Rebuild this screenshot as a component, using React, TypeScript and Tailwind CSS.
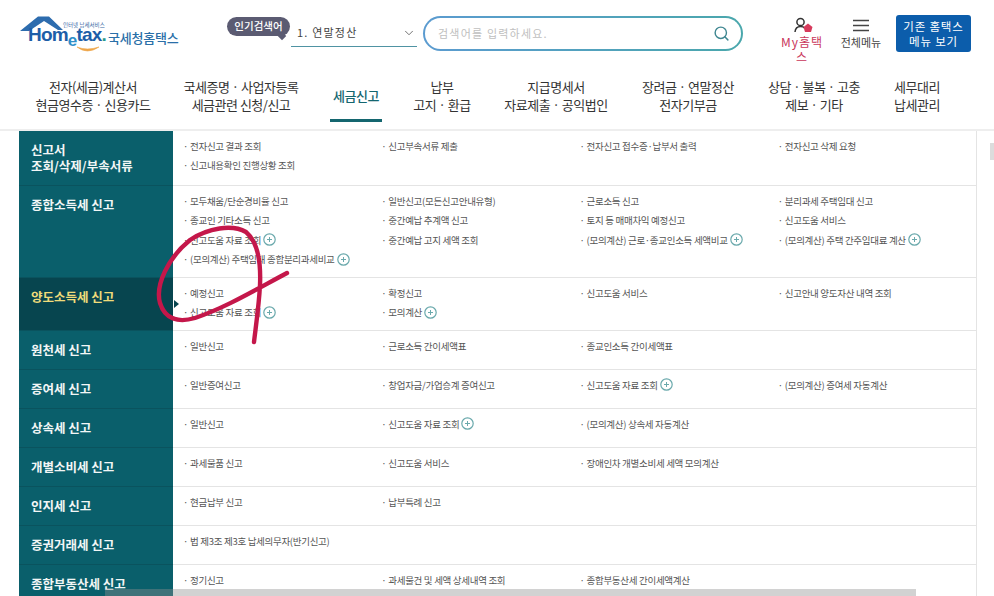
import React from 'react';
import { Search, ChevronDown } from 'lucide-react';

const FONT = "font-['Noto_Sans_CJK_KR','Noto_Sans',sans-serif]";

interface Item {
  text: string;
  plus?: boolean;
}

interface Row {
  label: string[];
  height: string;
  active?: boolean;
  items: (Item | null)[];
}

const nav = [
  { w: 'w-[146px]', lines: ['전자(세금)계산서', '현금영수증 · 신용카드'] },
  { w: 'w-[150px]', lines: ['국세증명 · 사업자등록', '세금관련 신청/신고'] },
  { w: 'w-[80px]', lines: ['세금신고'], active: true },
  { w: 'w-[92px]', lines: ['납부', '고지 · 환급'] },
  { w: 'w-[136px]', lines: ['지급명세서', '자료제출 · 공익법인'] },
  { w: 'w-[128px]', lines: ['장려금 · 연말정산', '전자기부금'] },
  { w: 'w-[124px]', lines: ['상담 · 불복 · 고충', '제보 · 기타'] },
  { w: 'w-[82px]', lines: ['세무대리', '납세관리'] },
];

const rows: Row[] = [
  {
    label: ['신고서', '조회/삭제/부속서류'],
    height: 'h-[55px]',
    items: [
      { text: '전자신고 결과 조회' },
      { text: '신고부속서류 제출' },
      { text: '전자신고 접수증·납부서 출력' },
      { text: '전자신고 삭제 요청' },
      { text: '신고내용확인 진행상황 조회' },
    ],
  },
  {
    label: ['종합소득세 신고'],
    height: 'h-[92px]',
    items: [
      { text: '모두채움/단순경비율 신고' },
      { text: '일반신고(모든신고안내유형)' },
      { text: '근로소득 신고' },
      { text: '분리과세 주택임대 신고' },
      { text: '종교인 기타소득 신고' },
      { text: '중간예납 추계액 신고' },
      { text: '토지 등 매매차익 예정신고' },
      { text: '신고도움 서비스' },
      { text: '신고도움 자료 조회', plus: true },
      { text: '중간예납 고지 세액 조회' },
      { text: '(모의계산) 근로·종교인소득 세액비교', plus: true },
      { text: '(모의계산) 주택 간주임대료 계산', plus: true },
      { text: '(모의계산) 주택임대 종합분리과세비교', plus: true },
    ],
  },
  {
    label: ['양도소득세 신고'],
    height: 'h-[53px]',
    active: true,
    items: [
      { text: '예정신고' },
      { text: '확정신고' },
      { text: '신고도움 서비스' },
      { text: '신고안내 양도자산 내역 조회' },
      { text: '신고도움 자료 조회', plus: true },
      { text: '모의계산', plus: true },
    ],
  },
  {
    label: ['원천세 신고'],
    height: 'h-[39px]',
    items: [{ text: '일반신고' }, { text: '근로소득 간이세액표' }, { text: '종교인소득 간이세액표' }],
  },
  {
    label: ['증여세 신고'],
    height: 'h-[39px]',
    items: [
      { text: '일반증여신고' },
      { text: '창업자금/가업승계 증여신고' },
      { text: '신고도움 자료 조회', plus: true },
      { text: '(모의계산) 증여세 자동계산' },
    ],
  },
  {
    label: ['상속세 신고'],
    height: 'h-[39px]',
    items: [{ text: '일반신고' }, { text: '신고도움 자료 조회', plus: true }, { text: '(모의계산) 상속세 자동계산' }],
  },
  {
    label: ['개별소비세 신고'],
    height: 'h-[39px]',
    items: [{ text: '과세물품 신고' }, { text: '신고도움 서비스' }, { text: '장애인차 개별소비세 세액 모의계산' }],
  },
  {
    label: ['인지세 신고'],
    height: 'h-[39px]',
    items: [{ text: '현금납부 신고' }, { text: '납부특례 신고' }],
  },
  {
    label: ['증권거래세 신고'],
    height: 'h-[39px]',
    items: [{ text: '법 제3조 제3호 납세의무자(반기신고)' }],
  },
  {
    label: ['종합부동산세 신고'],
    height: 'h-[39px]',
    items: [{ text: '정기신고' }, { text: '과세물건 및 세액 상세내역 조회' }, { text: '종합부동산세 간이세액계산' }],
  },
];

const PlusBadge = () => (
  <svg width="13" height="13" viewBox="0 0 13 13" className="ml-[2px] shrink-0" fill="none">
    <circle cx="6.5" cy="6.5" r="5.7" stroke="#6aa9ac" strokeWidth="1.2" />
    <path d="M6.5 4v5M4 6.5h5" stroke="#6aa9ac" strokeWidth="1" />
  </svg>
);

const Logo = () => (
  <div className="w-[160px] h-[40px] relative">
    <svg width="46" height="18" viewBox="0 0 46 18" className="absolute left-0 top-[1px]" fill="none">
      <path d="M0 15 L18 0.5 L29 0.5 L43 14 L38 14 L24 5 L9 15 Z" fill="#2d6cae" />
    </svg>
    <span className="absolute left-[43px] top-[7px] text-[5.5px] leading-[6px] text-[#3b6aa5] whitespace-nowrap">인터넷 납세서비스</span>
    <span className="absolute left-[8px] top-[9px] font-['Liberation_Sans',sans-serif] font-bold text-[19px] leading-[22px] tracking-[-0.8px] text-[#1d5ea8] whitespace-nowrap">
      Hom<span className="relative top-[5px] text-[#2f8fc9] text-[17px]">e</span>tax<span className="text-[#2a9a8f]">.</span>
    </span>
    <svg width="24" height="8" viewBox="0 0 24 8" className="absolute left-[56px] top-[31px]" fill="none">
      <path d="M1 1 Q 11 9 23 1 Q 11 5 1 1Z" fill="#eea64a" stroke="#eea64a" strokeWidth="0.6" />
    </svg>
    <span className="absolute left-[88px] top-[14px] font-medium text-[13px] leading-[18px] text-[#2a6fa8] whitespace-nowrap tracking-[-0.2px]">국세청홈택스</span>
  </div>
);

const Header = () => (
  <header className="h-[131px] border-b-2 border-[#eeeeee] bg-white">
    <div className="flex items-start h-[74px] pl-[20px]">
      <div className="mt-[15px] shrink-0">
        <Logo />
      </div>
      <div className="ml-[47px] mt-[17px] relative h-[19px] w-[63px] rounded-full bg-[#5b5b72] text-white text-[10.5px] leading-[18px] text-center font-medium">
        인기검색어
        <span className="absolute right-[5px] bottom-[-3px] w-[6px] h-[6px] bg-[#5b5b72] rotate-45" />
      </div>
      <div className="ml-[1px] mt-[19px] w-[126px] h-[28px] border-b border-[#4f93a3] flex items-center justify-between pl-[6px] pr-[1px]">
        <span className="text-[11px] text-[#444] tracking-[1.2px]">1. 연말정산</span>
        <ChevronDown size={14} strokeWidth={1.4} className="text-[#555]" />
      </div>
      <div className="ml-[6px] mt-[16px] w-[320px] h-[35px] rounded-full p-[2px] bg-gradient-to-r from-[#5b9bd0] to-[#4aa7ac]">
        <div className="w-full h-full rounded-full bg-white flex items-center justify-between pl-[13px] pr-[11px]">
          <span className="text-[11px] text-[#c0c0c0] tracking-[1.2px]">검색어를 입력하세요.</span>
          <Search size={17} strokeWidth={2} className="text-[#3f8791]" />
        </div>
      </div>
      <div className="ml-[35px] mt-[17px] w-[48px] flex flex-col items-center">
        <svg width="20" height="16" viewBox="0 0 20 16" fill="none" className="ml-[3px]">
          <circle cx="6.5" cy="5" r="3.6" stroke="#333" strokeWidth="1.5" />
          <path d="M1 15 Q 1.5 9.5 6.5 9.5 Q 9.5 9.5 10.5 11" stroke="#333" strokeWidth="1.5" />
          <path d="M14 6.5 L18.5 10 L17 15 L11 15 L9.5 10Z" fill="#d73a5c" />
        </svg>
        <span className="text-[12px] leading-[15px] text-[#c9365a] text-center break-all mt-[1px] tracking-[1px]">My홈택스</span>
      </div>
      <div className="ml-[12px] mt-[19px] w-[46px] flex flex-col items-center">
        <svg width="16" height="13" viewBox="0 0 16 13" fill="none">
          <path d="M0 1.5h16M0 6.5h16M0 11.5h16" stroke="#444" strokeWidth="1.6" />
        </svg>
        <span className="text-[11px] leading-[14px] text-[#444] mt-[3px] whitespace-nowrap">전체메뉴</span>
      </div>
      <div className="ml-[12px] mt-[15px] w-[75px] h-[37px] rounded-[3px] bg-[#0c5dab] text-white text-[11.5px] leading-[15px] text-center flex items-center justify-center tracking-[0.8px] whitespace-nowrap">
        <div>
          기존 홈택스
          <br />
          메뉴 보기
        </div>
      </div>
    </div>
    <nav className="flex pl-[20px] h-[54px]">
      {nav.map((n) => (
        <div key={n.lines[0]} className={`${n.w} shrink-0 flex flex-col items-center`}>
          <div className={`flex flex-col items-center justify-center h-[43px] text-[13px] leading-[18px] tracking-[-0.5px] whitespace-nowrap ${n.active ? 'text-[#14666f] font-medium' : 'text-[#333]'}`}>
            {n.lines.map((l) => (
              <span key={l}>{l}</span>
            ))}
          </div>
          {n.active && <span className="mt-[2px] w-[52px] h-[3px] bg-[#14666f]" />}
        </div>
      ))}
    </nav>
  </header>
);

const MenuRow = ({ row }: { row: Row }) => (
  <div className={`flex ${row.height} border-b border-[#e4e4e4]`}>
    <div className={`relative w-[154px] shrink-0 pl-[12px] pt-[9px] font-bold text-[12.5px] border-b border-[#0a535e] mb-[-1px] ${row.active ? 'bg-[#07454f] text-[#f0dc7a]' : 'bg-[#0a5f6b] text-[#f2f6f6]'}`}>
      {row.label.map((l) => (
        <div key={l} className="leading-[16px] first:mt-[2px] whitespace-nowrap">
          {l}
        </div>
      ))}
      {row.active && <span className="absolute right-[-6px] top-[22px] border-y-[4px] border-y-transparent border-l-[5px] border-l-[#07454f]" />}
    </div>
    <div className="flex-1 grid grid-cols-4 auto-rows-[19.6px] pl-[10px] pt-[5px] overflow-hidden">
      {row.items.map((item, i) =>
        item ? (
          <div key={i} className="flex items-center text-[9.5px] tracking-[-0.3px] text-[#555] whitespace-nowrap">
            <span className="mr-[2px]">·</span>
            {item.text}
            {item.plus && <PlusBadge />}
          </div>
        ) : (
          <div key={i} />
        )
      )}
    </div>
  </div>
);

const Scribble = () => (
  <svg width="994" height="596" viewBox="0 0 994 596" className="absolute left-0 top-0 pointer-events-none" fill="none">
    <path
      d="M287 273 C 255 290 225 308 195 318 C 178 323 165 319 160 303 C 155 285 168 258 190 240 C 208 228 232 224 246 232 C 258 242 261 262 260 285 C 259 305 256 325 254 342"
      stroke="#c4174a"
      strokeWidth="4.4"
      strokeLinecap="round"
      strokeLinejoin="round"
    />
  </svg>
);

export default function App() {
  return (
    <div className={`relative w-[994px] h-[596px] overflow-hidden bg-white ${FONT}`}>
      <Header />
      <div className="ml-[19px] w-[958px] border-r border-[#e4e4e4]">
        {rows.map((r) => (
          <MenuRow key={r.label[0]} row={r} />
        ))}
      </div>
      <Scribble />
      <div className="absolute left-[105px] top-[589px] w-[811px] h-[7px] bg-[#8f8f8f]/40" />
      <div className="absolute right-0 top-[143px] w-[4px] h-[17px] bg-[#dcdcdc]" />
    </div>
  );
}
